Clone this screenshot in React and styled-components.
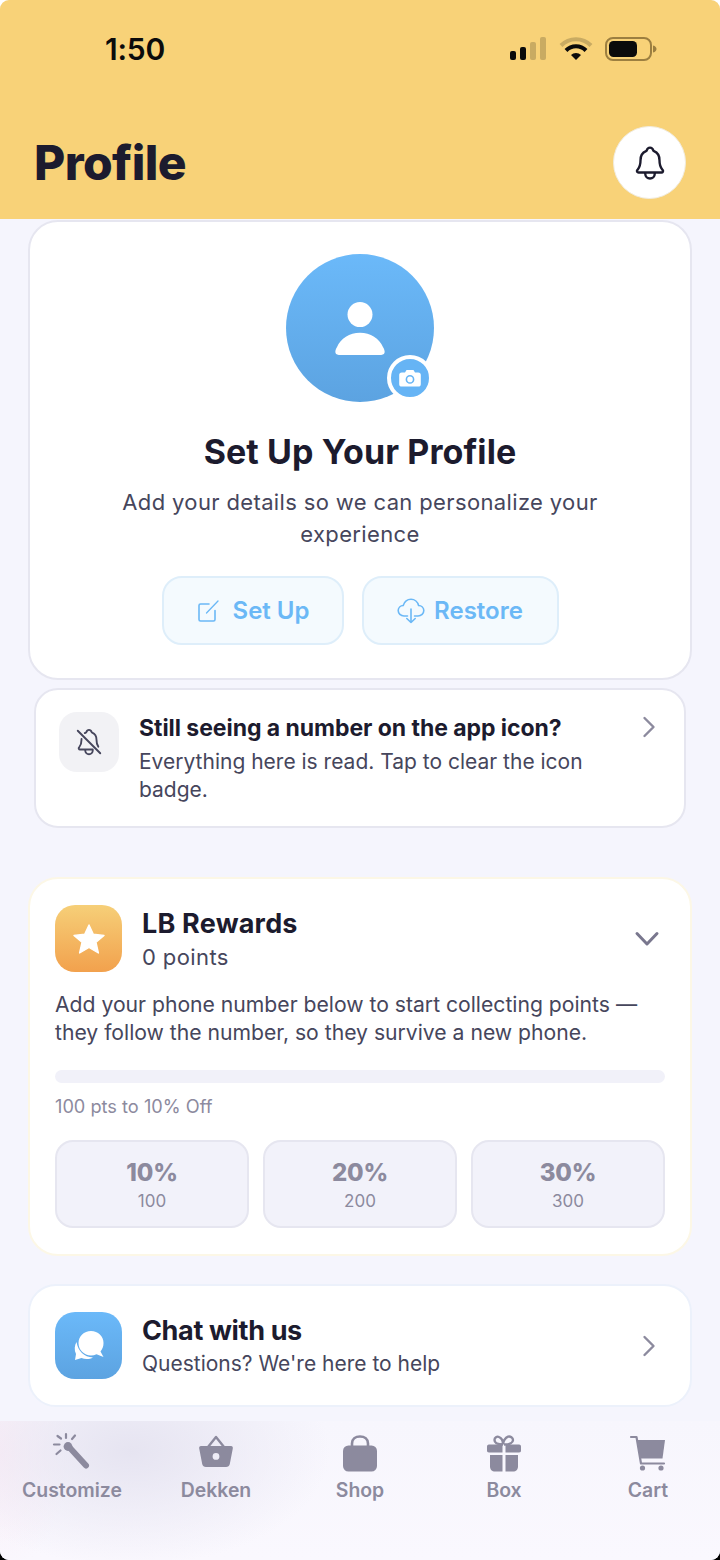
import React from 'react';
import styled, { createGlobalStyle } from 'styled-components';
import { IoNotificationsOutline, IoNotificationsOffOutline } from 'react-icons/io5';

const Global = createGlobalStyle`
  html, body { margin: 0; padding: 0; }
  * { box-sizing: border-box; }
  body {
    height: 1560px;
    background: linear-gradient(180deg, #fff 50%, #000 50%);
    font-family: Inter, "Noto Sans", sans-serif;
  }
`;

const Screen = styled.div`
  width: 720px; height: 1560px; overflow: hidden;
  display: flex; flex-direction: column;
  background: #f5f5fd; color: #1c1b2e;
  border-radius: 9px;
`;
const Header = styled.header`
  flex: none; height: 219px; background: #f8d278; padding: 0 34px;
  display: flex; flex-direction: column;
`;
const StatusBar = styled.div`
  height: 98px; display: flex; align-items: center; justify-content: space-between;
  padding: 0 29px 0 71px;
`;
const StatusIcons = styled.div`
  display: flex; align-items: center; gap: 12px;
`;
const Time = styled.span`
  font-size: 30px; font-weight: 600; color: #0b0b0b; letter-spacing: -0.2px;
`;
const TitleRow = styled.div`
  margin-top: 28px; display: flex; align-items: center; justify-content: space-between;
`;
const PageTitle = styled.h1`
  margin: 0; font-size: 48px; font-weight: 800; letter-spacing: -0.6px; color: #1c1b2e;
`;
const RoundButton = styled.div`
  width: 73px; height: 73px; border-radius: 50%; background: #fff;
  border: 1.5px solid #f1ecdf;
  display: flex; align-items: center; justify-content: center; color: #1c1b2e;
`;
const Main = styled.main`
  flex: 1; min-height: 0; padding: 1px 28px 0; display: flex; flex-direction: column;
`;
const ProfileCard = styled.section`
  height: 460px; background: #fff; border: 2px solid #e6e6f0; border-radius: 30px;
  padding-top: 32px; display: flex; flex-direction: column; align-items: center;
`;
const Avatar = styled.div`
  position: relative; width: 148px; height: 148px; border-radius: 50%; padding-top: 2px;
  background: linear-gradient(180deg, #6bb9f9, #5ca3e1);
  display: flex; align-items: center; justify-content: center;
`;
const CameraBadge = styled.div`
  position: absolute; right: 1px; bottom: 1px; width: 46px; height: 46px; border-radius: 50%;
  background: #66b4f5; border: 4px solid #fff;
  display: flex; align-items: center; justify-content: center;
`;
const ProfileTitle = styled.h2`
  margin: 30px 0 0; font-size: 34px; line-height: 40px; font-weight: 700; letter-spacing: 0.1px; color: #1c1b2e;
`;
const ProfileText = styled.p`
  margin: 14px 0 0; width: 500px; text-align: center; font-size: 22px; line-height: 32px; color: #46465c; letter-spacing: 0.36px;
`;
const ButtonRow = styled.div`
  margin-top: 26px; display: flex; gap: 18px;
`;
const SoftButton = styled.div`
  width: ${p => p.$w}px; height: 69px; border-radius: 20px; background: #f4fafe; border: 2px solid #deeefa;
  display: flex; align-items: center; justify-content: center; gap: ${p => p.$gap}px;
  color: #6bb8f6; font-size: 24px; font-weight: 600;
`;
const ButtonIcon = styled.svg`
  fill: none; stroke: #6bb8f6; stroke-width: 1.6; stroke-linecap: round; stroke-linejoin: round; flex: none;
`;
const BadgeCard = styled.section`
  margin: 8px 6px 0; height: 140px; background: #fff; border: 2px solid #e6e6f0; border-radius: 24px;
  padding: 22px 28px 0 23px; display: flex; align-items: flex-start; gap: 20px;
`;
const GreyTile = styled.div`
  flex: none; width: 60px; height: 60px; border-radius: 18px; background: #f2f2f5;
  display: flex; align-items: center; justify-content: center; color: #46465c;
`;
const BadgeBody = styled.div`
  flex: 1; min-width: 0;
`;
const BadgeTitle = styled.div`
  font-size: 23px; line-height: 32px; font-weight: 700; letter-spacing: -0.05px; color: #1c1b2e;
`;
const BadgeText = styled.div`
  margin-top: 4px; width: 470px; font-size: 21px; line-height: 28px; color: #46465c;
`;
const Chevron = styled.svg`
  flex: none; fill: none; stroke: #8c8a9e; stroke-width: 2.4; stroke-linecap: round; stroke-linejoin: round; display: block;
`;
const TopChevron = styled.div`
  flex: none; margin-top: 3px; display: flex;
`;
const RewardsCard = styled.section`
  margin-top: 49px; height: 379px; background: #fff; border: 2px solid #fcf7e6; border-radius: 30px;
  padding: 26px 25px 0;
`;
const CardHead = styled.div`
  display: flex; align-items: center; gap: 20px;
`;
const IconTile = styled.div`
  flex: none; width: 67px; height: 67px; border-radius: 20px;
  background: linear-gradient(180deg, ${p => p.$from}, ${p => p.$to});
  display: flex; align-items: center; justify-content: center;
`;
const HeadText = styled.div`
  flex: 1; min-width: 0;
`;
const CardTitle = styled.div`
  font-size: 27px; line-height: 36px; font-weight: 700; letter-spacing: ${p => p.$ls}px; color: #1c1b2e;
`;
const CardSub = styled.div`
  font-size: ${p => p.$size || 22}px; line-height: 30px; color: #46465c; letter-spacing: ${p => p.$ls || 0}px;
`;
const EndIcon = styled.div`
  flex: none; display: flex; margin-right: ${p => p.$mr || 0}px;
`;
const RewardsText = styled.p`
  margin: 19px 0 0; font-size: 21.15px; line-height: 28px; color: #46465c;
`;
const Progress = styled.div`
  margin-top: 23px; height: 13px; border-radius: 7px; background: #f1f1f9;
`;
const ProgressLabel = styled.div`
  margin-top: 11px; font-size: 18.2px; line-height: 24px; color: #8c8a9e;
`;
const TierGrid = styled.div`
  margin-top: 22px; display: grid; grid-template-columns: repeat(3, 1fr); gap: 14px;
`;
const Tier = styled.div`
  height: 88px; border-radius: 18px; background: #f2f2fa; border: 2px solid #e6e6f0; padding-top: 2px;
  display: flex; flex-direction: column; align-items: center; justify-content: center;
`;
const TierValue = styled.div`
  font-size: 24px; line-height: 31px; font-weight: 800; color: #8c8a9e; letter-spacing: -0.2px;
`;
const TierPoints = styled.div`
  margin-top: 1px; font-size: 17px; line-height: 25px; color: #8c8a9e;
`;
const ChatCard = styled.section`
  margin-top: 28px; height: 123px; background: #fff; border: 2px solid #ecf1fb; border-radius: 28px;
  padding: 0 25px; display: flex; align-items: center; gap: 20px;
`;
const TabBar = styled.nav`
  flex: none; height: 139px; display: grid; grid-template-columns: repeat(5, 144px); padding-top: 14px;
  background:
    radial-gradient(ellipse 200px 115px at 130px 30px, #e6e4f1 0%, rgba(230,228,241,0) 100%),
    radial-gradient(ellipse 70px 120px at 0 30px, #fbeef7 0%, rgba(251,238,247,0) 100%),
    linear-gradient(180deg, #f7f6fd, #faf8fe);
`;
const Tab = styled.div`
  display: flex; flex-direction: column; align-items: center;
  color: #8c8a9e; font-size: 19.4px; font-weight: 600;
`;
const TabIcon = styled.svg`
  width: 44px; height: 44px; fill: #8c8a9e; display: block; overflow: visible;
`;
const TabLabel = styled.span`
  margin-top: -2px; line-height: 26px;
`;

const SignalIcon = () => (
  <svg width="38" height="24" viewBox="0 0 38 24">
    <rect x="1" y="14" width="6" height="9" rx="2" fill="#0b0b0b" />
    <rect x="11" y="10" width="6" height="13" rx="2" fill="#0b0b0b" />
    <rect x="21" y="5" width="6" height="18" rx="2" fill="#c9ab62" />
    <rect x="31" y="0" width="6" height="23" rx="2" fill="#c9ab62" />
  </svg>
);
const WifiIcon = () => (
  <svg width="34" height="24" viewBox="0 0 34 24">
    <path d="M2 8.5 A21 21 0 0 1 32 8.5" fill="none" stroke="#c9ab62" strokeWidth="4" />
    <path d="M7 13.5 A14 14 0 0 1 27 13.5" fill="none" stroke="#0b0b0b" strokeWidth="4" />
    <path d="M12 18 A7 7 0 0 1 22 18 L17 23 Z" fill="#0b0b0b" />
  </svg>
);
const BatteryIcon = () => (
  <svg width="52" height="24" viewBox="0 0 52 24">
    <rect x="1" y="1" width="45" height="22" rx="7" fill="none" stroke="#9c7f40" strokeWidth="2" />
    <rect x="4" y="4" width="28" height="16" rx="4.5" fill="#0b0b0b" />
    <path d="M48 8.5 c2.5 .6 3.5 2 3.5 3.5 s-1 2.9 -3.5 3.5 Z" fill="#9c7f40" />
  </svg>
);
const PersonIcon = () => (
  <svg width="50" height="54" viewBox="0 0 52 56" fill="#fff">
    <circle cx="26" cy="13" r="13" />
    <path d="M4 55 C-1 55 0 50 2 47 C6 38 15 32 26 32 C37 32 46 38 50 47 C52 50 53 55 48 55 Z" />
  </svg>
);
const CameraIcon = () => (
  <svg width="22" height="18" viewBox="0 0 22 18">
    <path fillRule="evenodd" fill="#fff" d="M7.5 1 h7 l1.5 2.4 h3.2 a2.6 2.6 0 0 1 2.6 2.6 v9 a2.6 2.6 0 0 1 -2.6 2.6 h-16.4 a2.6 2.6 0 0 1 -2.6 -2.6 v-9 a2.6 2.6 0 0 1 2.6 -2.6 h3.2 Z M11 6 a4.4 4.4 0 1 0 0 8.8 a4.4 4.4 0 1 0 0 -8.8 Z M11 7.6 a2.8 2.8 0 1 1 0 5.6 a2.8 2.8 0 1 1 0 -5.6 Z" />
  </svg>
);
const PenIcon = () => (
  <ButtonIcon width="24" height="24" viewBox="0 0 24 24">
    <path d="M13 5 H4.5 A1.5 1.5 0 0 0 3 6.5 V20.5 A1.5 1.5 0 0 0 4.5 22 H17.5 A1.5 1.5 0 0 0 19 20.5 V11.5" />
    <path d="M10.5 14 L22 2" strokeWidth="1.3" />
  </ButtonIcon>
);
const CloudIcon = () => (
  <ButtonIcon width="28" height="26" viewBox="0 0 28 26">
    <path d="M10.5 18 H7 C3.7 18 1.2 15.5 1.2 12.6 C1.2 9.8 3.5 7.6 6.2 7.5 C7.4 3.8 10.3 1.3 14 1.3 C17.7 1.3 20.8 3.9 21.6 7.5 C24.5 7.6 26.8 9.8 26.8 12.6 C26.8 15.5 24.3 18 21 18 H17.5" />
    <path d="M14 11 V24.5 M9.8 20.5 L14 24.5 L18.2 20.5" />
  </ButtonIcon>
);
const StarIcon = () => (
  <svg width="34" height="32" viewBox="0 0 34 32">
    <path fill="#fff" stroke="#fff" strokeWidth="1.4" strokeLinejoin="round" d="M17 2 L21.3 11.3 L32 12.4 L24 19.3 L26.4 30 L17 24.5 L7.6 30 L10 19.3 L2 12.4 L12.7 11.3 Z" />
  </svg>
);
const ChatIcon = () => (
  <svg width="32" height="30" viewBox="0 0 32 30">
    <path fill="#fff" d="M3.5 11 C1.5 14.5 1 19 3 23 L2 29 L8.5 27 C12 28.5 16.5 28.5 20 26.5 C11 26 5 20 3.5 11 Z" />
    <path fill="#fff" d="M18 0 C25 0 30.5 5.4 30.5 12 C30.5 15.5 29.5 18 27.5 20.4 L30.5 26 L23.5 23.2 C21.8 24 20 24.4 18 24.4 C11 24.4 5.5 19 5.5 12 C5.5 5.4 11 0 18 0 Z" />
  </svg>
);
const WandIcon = () => (
  <TabIcon viewBox="0 0 44 44">
    <path d="M20 13 L36 30.5" stroke="#8c8a9e" strokeWidth="6" strokeLinecap="round" fill="none" />
    <circle cx="18" cy="11.5" r="4.4" />
    <g stroke="#8c8a9e" strokeWidth="2.2" strokeLinecap="round" fill="none">
      <path d="M16 -1 L16 3" />
      <path d="M25 0.5 L22 4" />
      <path d="M7.5 1 L11 3.5" />
      <path d="M4 9.5 L9.5 9.5" />
      <path d="M6.5 19 L10.5 15.5" />
    </g>
  </TabIcon>
);
const BasketIcon = () => (
  <TabIcon viewBox="0 0 44 44">
    <path d="M14 12 L22 2 L30 12" fill="none" stroke="#8c8a9e" strokeWidth="2.4" strokeLinejoin="round" />
    <path fillRule="evenodd" d="M7 11 H37 C38.5 11 39 12 38.8 13.4 L35.8 29 C35.4 31 34 32 32 32 H12 C10 32 8.6 31 8.2 29 L5.2 13.4 C5 12 5.5 11 7 11 Z M22 18 a3.4 3.4 0 1 0 0 6.8 a3.4 3.4 0 1 0 0 -6.8 Z" />
  </TabIcon>
);
const BagIcon = () => (
  <TabIcon viewBox="0 0 44 44">
    <path d="M14 11 V8.5 C14 4 17.5 1.5 22 1.5 C26.5 1.5 30 4 30 8.5 V11" fill="none" stroke="#8c8a9e" strokeWidth="2.6" />
    <rect x="5" y="10.5" width="34" height="26" rx="5.5" />
  </TabIcon>
);
const GiftIcon = () => (
  <TabIcon viewBox="0 0 44 44">
    <path d="M21 9.5 C15 9.5 12.5 7.5 12.5 5 C12.5 2.5 15 1 17 2 C19.5 3 21 6 21 9.5 C21 6 23.5 2.5 26 1.6 C28.5 1 31 2.5 31 5 C31 7.5 28 9.5 22 9.5" fill="none" stroke="#8c8a9e" strokeWidth="2.4" />
    <path d="M7 9.5 H20.5 V17.5 H7 C5.5 17.5 5 16.5 5 15.5 V11.5 C5 10.5 5.5 9.5 7 9.5 Z" />
    <path d="M23.5 9.5 H37 C38.5 9.5 39 10.5 39 11.5 V15.5 C39 16.5 38.5 17.5 37 17.5 H23.5 Z" />
    <path d="M8 20 H20.5 V36.5 H13 C10 36.5 8 34.5 8 31.5 Z" />
    <path d="M23.5 20 H36 V31.5 C36 34.5 34 36.5 31 36.5 H23.5 Z" />
  </TabIcon>
);
const CartIcon = () => (
  <TabIcon viewBox="0 0 44 44">
    <path d="M5 2 H10.5 L15 28.5 H38" fill="none" stroke="#8c8a9e" strokeWidth="2.2" strokeLinecap="round" strokeLinejoin="round" />
    <path d="M11.5 5 H39 L36.5 23.5 H14.5 Z" />
    <circle cx="16.5" cy="33" r="2.6" />
    <circle cx="35" cy="33" r="2.6" />
  </TabIcon>
);

const tiers = [['10%', '100'], ['20%', '200'], ['30%', '300']];
const tabs = [
  ['Customize', WandIcon], ['Dekken', BasketIcon], ['Shop', BagIcon], ['Box', GiftIcon], ['Cart', CartIcon],
];

export default function App() {
  return (
    <Screen>
      <Global />
      <Header>
        <StatusBar>
          <Time>1:50</Time>
          <StatusIcons>
            <SignalIcon /><WifiIcon /><BatteryIcon />
          </StatusIcons>
        </StatusBar>
        <TitleRow>
          <PageTitle>Profile</PageTitle>
          <RoundButton><IoNotificationsOutline size={38} /></RoundButton>
        </TitleRow>
      </Header>
      <Main>
        <ProfileCard>
          <Avatar>
            <PersonIcon />
            <CameraBadge><CameraIcon /></CameraBadge>
          </Avatar>
          <ProfileTitle>Set Up Your Profile</ProfileTitle>
          <ProfileText>Add your details so we can personalize your experience</ProfileText>
          <ButtonRow>
            <SoftButton $w={182} $gap={13}><PenIcon />Set Up</SoftButton>
            <SoftButton $w={197} $gap={9}><CloudIcon />Restore</SoftButton>
          </ButtonRow>
        </ProfileCard>
        <BadgeCard>
          <GreyTile><IoNotificationsOffOutline size={30} /></GreyTile>
          <BadgeBody>
            <BadgeTitle>Still seeing a number on the app icon?</BadgeTitle>
            <BadgeText>Everything here is read. Tap to clear the icon badge.</BadgeText>
          </BadgeBody>
          <TopChevron>
            <Chevron width="14" height="24" viewBox="0 0 14 24"><path d="M2.5 3 L11.5 12 L2.5 21" /></Chevron>
          </TopChevron>
        </BadgeCard>
        <RewardsCard>
          <CardHead>
            <IconTile $from="#f6cf78" $to="#f2a14d"><StarIcon /></IconTile>
            <HeadText>
              <CardTitle $ls={0.2}>LB Rewards</CardTitle>
              <CardSub $ls={0.4}>0 points</CardSub>
            </HeadText>
            <EndIcon $mr={5}>
              <Chevron width="26" height="18" viewBox="0 0 26 18"><path d="M3 3.5 L13 14 L23 3.5" strokeWidth="3" stroke="#79778e" /></Chevron>
            </EndIcon>
          </CardHead>
          <RewardsText>Add your phone number below to start collecting points — they follow the number, so they survive a new phone.</RewardsText>
          <Progress />
          <ProgressLabel>100 pts to 10% Off</ProgressLabel>
          <TierGrid>
            {tiers.map(([v, p]) => (
              <Tier key={v}><TierValue>{v}</TierValue><TierPoints>{p}</TierPoints></Tier>
            ))}
          </TierGrid>
        </RewardsCard>
        <ChatCard>
          <IconTile $from="#6bb9f9" $to="#5ca3e1"><ChatIcon /></IconTile>
          <HeadText>
            <CardTitle $ls={-0.35}>Chat with us</CardTitle>
            <CardSub $size={21}>Questions? We're here to help</CardSub>
          </HeadText>
          <EndIcon $mr={9}>
            <Chevron width="14" height="24" viewBox="0 0 14 24"><path d="M2.5 3 L11.5 12 L2.5 21" /></Chevron>
          </EndIcon>
        </ChatCard>
      </Main>
      <TabBar>
        {tabs.map(([label, Icon]) => (
          <Tab key={label}><Icon /><TabLabel>{label}</TabLabel></Tab>
        ))}
      </TabBar>
    </Screen>
  );
}
